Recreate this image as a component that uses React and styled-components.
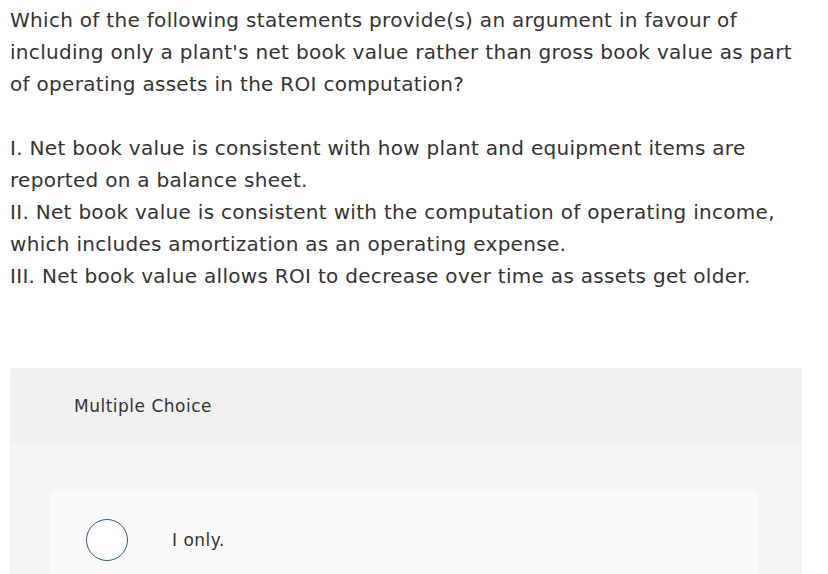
import React from "react";
import styled, { createGlobalStyle } from "styled-components";

const GlobalStyle = createGlobalStyle`
  html, body {
    margin: 0;
    padding: 0;
    background: #ffffff;
  }
  body {
    font-family: "DejaVu Sans", "Open Sans", Arial, sans-serif;
    color: #333333;
  }
`;

const statements = [
  "I. Net book value is consistent with how plant and equipment items are reported on a balance sheet.",
  "II. Net book value is consistent with the computation of operating income, which includes amortization as an operating expense.",
  "III. Net book value allows ROI to decrease over time as assets get older.",
];

const choices = ["I only."];

function App() {
  return (
    <>
      <GlobalStyle />
      <Page>
        <Prompt>
          <p>
            Which of the following statements provide(s) an argument in favour of
            including only a plant's net book value rather than gross book value as
            part of operating assets in the ROI computation?
          </p>
          <p>
            {statements.map((s) => (
              <Line key={s}>{s}</Line>
            ))}
          </p>
        </Prompt>

        <ChoiceCard>
          <CardHeader>Multiple Choice</CardHeader>
          <CardBody>
            {choices.map((c) => (
              <Option key={c}>
                <Radio />
                <OptionLabel>{c}</OptionLabel>
              </Option>
            ))}
          </CardBody>
        </ChoiceCard>
      </Page>
    </>
  );
}

export default App;

const Page = styled.div`
  padding: 4px 26px 0 10px;
`;

const Prompt = styled.div`
  font-size: 20px;
  line-height: 32px;
  letter-spacing: 0.3px;
  color: #333333;

  p {
    margin: 0 0 32px;
  }
`;

const Line = styled.span`
  display: block;
`;

const ChoiceCard = styled.div`
  margin-top: 76px;
  background-color: #f4f4f4;
  border-radius: 4px;
  overflow: hidden;
  height: 220px;
`;

const CardHeader = styled.div`
  display: flex;
  align-items: center;
  height: 75px;
  padding-left: 64px;
  background-color: #f0f0f0;
  font-size: 17px;
  letter-spacing: 0.5px;
  color: #333333;
`;

const CardBody = styled.div`
  padding: 48px 43px 0 40px;
`;

const Option = styled.div`
  display: flex;
  align-items: center;
  gap: 44px;
  height: 98px;
  padding-left: 36px;
  background-color: #fafafa;
  border-radius: 4px;
`;

const Radio = styled.span`
  box-sizing: border-box;
  width: 42px;
  height: 42px;
  border-radius: 50%;
  border: 1.5px solid #2f5a86;
  background: #ffffff;
  flex-shrink: 0;
`;

const OptionLabel = styled.span`
  font-size: 17px;
  letter-spacing: 0.5px;
  color: #333333;
`;
